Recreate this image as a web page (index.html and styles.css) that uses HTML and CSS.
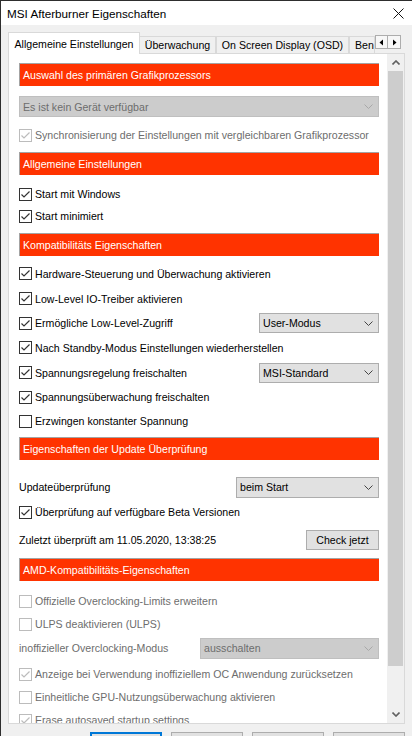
FILE: index.html
```html
<!DOCTYPE html>
<html lang="de">
<head>
<meta charset="utf-8">
<title>MSI Afterburner Eigenschaften</title>
<link rel="stylesheet" href="styles.css">
</head>
<body>
<div class="window">
  <div class="titlebar">
    <span class="title">MSI Afterburner Eigenschaften</span>
    <svg class="close" width="11" height="11" viewBox="0 0 11 11"><path d="M0.5 0.5L10.5 10.5M10.5 0.5L0.5 10.5"/></svg>
  </div>
  <div class="tabstrip">
    <div class="tab active">Allgemeine Einstellungen</div>
    <div class="tab t2">Überwachung</div>
    <div class="tab t3">On Screen Display (OSD)</div>
    <div class="tab t4">Ben</div>
    <div class="tabscroll">
      <span class="tsb"><svg width="5" height="7" viewBox="0 0 5 7"><path d="M4 0.5V6.5L0.5 3.5Z"/></svg></span>
      <span class="tsb"><svg width="5" height="7" viewBox="0 0 5 7"><path d="M1 0.5V6.5L4.5 3.5Z"/></svg></span>
    </div>
  </div>
  <div class="panel">
    <div class="content">
      <div class="hdr">Auswahl des primären Grafikprozessors</div>
      <div class="sel dis full s1"><span>Es ist kein Gerät verfügbar</span><svg class="chev" width="9" height="5" viewBox="0 0 9 5"><path d="M0.5 0.5L4.5 4.5L8.5 0.5"/></svg></div>
      <div class="row r22 m7"><svg class="cb dis" viewBox="0 0 13 13"><rect x="0.5" y="0.5" width="12" height="12"/><path d="M2.5 6.5L5 9L10.5 3.5"/></svg><span class="lbl grey">Synchronisierung der Einstellungen mit vergleichbaren Grafikprozessor</span></div>

      <div class="hdr m6">Allgemeine Einstellungen</div>
      <div class="row r22 m8"><svg class="cb" viewBox="0 0 13 13"><rect x="0.5" y="0.5" width="12" height="12"/><path d="M2.5 6.5L5 9L10.5 3.5"/></svg><span class="lbl">Start mit Windows</span></div>
      <div class="row r22"><svg class="cb" viewBox="0 0 13 13"><rect x="0.5" y="0.5" width="12" height="12"/><path d="M2.5 6.5L5 9L10.5 3.5"/></svg><span class="lbl">Start minimiert</span></div>

      <div class="hdr m6">Kompatibilitäts Eigenschaften</div>
      <div class="row r25 m5"><svg class="cb" viewBox="0 0 13 13"><rect x="0.5" y="0.5" width="12" height="12"/><path d="M2.5 6.5L5 9L10.5 3.5"/></svg><span class="lbl">Hardware-Steuerung und Überwachung aktivieren</span></div>
      <div class="row r25"><svg class="cb" viewBox="0 0 13 13"><rect x="0.5" y="0.5" width="12" height="12"/><path d="M2.5 6.5L5 9L10.5 3.5"/></svg><span class="lbl">Low-Level IO-Treiber aktivieren</span></div>
      <div class="row r24"><svg class="cb" viewBox="0 0 13 13"><rect x="0.5" y="0.5" width="12" height="12"/><path d="M2.5 6.5L5 9L10.5 3.5"/></svg><span class="lbl">Ermögliche Low-Level-Zugriff</span>
        <div class="sel w120"><span>User-Modus</span><svg class="chev" width="9" height="5" viewBox="0 0 9 5"><path d="M0.5 0.5L4.5 4.5L8.5 0.5"/></svg></div></div>
      <div class="row r25"><svg class="cb" viewBox="0 0 13 13"><rect x="0.5" y="0.5" width="12" height="12"/><path d="M2.5 6.5L5 9L10.5 3.5"/></svg><span class="lbl">Nach Standby-Modus Einstellungen wiederherstellen</span></div>
      <div class="row r25"><svg class="cb" viewBox="0 0 13 13"><rect x="0.5" y="0.5" width="12" height="12"/><path d="M2.5 6.5L5 9L10.5 3.5"/></svg><span class="lbl">Spannungsregelung freischalten</span>
        <div class="sel w120"><span>MSI-Standard</span><svg class="chev" width="9" height="5" viewBox="0 0 9 5"><path d="M0.5 0.5L4.5 4.5L8.5 0.5"/></svg></div></div>
      <div class="row r24"><svg class="cb" viewBox="0 0 13 13"><rect x="0.5" y="0.5" width="12" height="12"/><path d="M2.5 6.5L5 9L10.5 3.5"/></svg><span class="lbl">Spannungsüberwachung freischalten</span></div>
      <div class="row r24"><svg class="cb off" viewBox="0 0 13 13"><rect x="0.5" y="0.5" width="12" height="12"/></svg><span class="lbl">Erzwingen konstanter Spannung</span></div>

      <div class="hdr m4">Eigenschaften der Update Überprüfung</div>
      <div class="row r24 m15"><span class="plain">Updateüberprüfung</span>
        <div class="sel w143"><span>beim Start</span><svg class="chev" width="9" height="5" viewBox="0 0 9 5"><path d="M0.5 0.5L4.5 4.5L8.5 0.5"/></svg></div></div>
      <div class="row r24 m1"><svg class="cb" viewBox="0 0 13 13"><rect x="0.5" y="0.5" width="12" height="12"/><path d="M2.5 6.5L5 9L10.5 3.5"/></svg><span class="lbl">Überprüfung auf verfügbare Beta Versionen</span></div>
      <div class="row r24 m4"><span class="plain">Zuletzt überprüft am 11.05.2020, 13:38:25</span><span class="btn check">Check jetzt</span></div>

      <div class="hdr m6">AMD-Kompatibilitäts-Eigenschaften</div>
      <div class="row r24 m8"><svg class="cb dis off" viewBox="0 0 13 13"><rect x="0.5" y="0.5" width="12" height="12"/></svg><span class="lbl grey">Offizielle Overclocking-Limits erweitern</span></div>
      <div class="row r22"><svg class="cb dis off" viewBox="0 0 13 13"><rect x="0.5" y="0.5" width="12" height="12"/></svg><span class="lbl grey">ULPS deaktivieren (ULPS)</span></div>
      <div class="row r24 m1"><span class="plain grey">inoffizieller Overclocking-Modus</span>
        <div class="sel dis w179"><span>ausschalten</span><svg class="chev" width="9" height="5" viewBox="0 0 9 5"><path d="M0.5 0.5L4.5 4.5L8.5 0.5"/></svg></div></div>
      <div class="row r24 m2"><svg class="cb dis" viewBox="0 0 13 13"><rect x="0.5" y="0.5" width="12" height="12"/><path d="M2.5 6.5L5 9L10.5 3.5"/></svg><span class="lbl grey">Anzeige bei Verwendung inoffiziellem OC Anwendung zurücksetzen</span></div>
      <div class="row r22"><svg class="cb dis off" viewBox="0 0 13 13"><rect x="0.5" y="0.5" width="12" height="12"/></svg><span class="lbl grey">Einheitliche GPU-Nutzungsüberwachung aktivieren</span></div>
      <div class="row r22 m1"><svg class="cb dis" viewBox="0 0 13 13"><rect x="0.5" y="0.5" width="12" height="12"/><path d="M2.5 6.5L5 9L10.5 3.5"/></svg><span class="lbl grey">Erase autosaved startup settings</span></div>
    </div>
    <div class="vscroll">
      <div class="sbtn"><svg width="8" height="5" viewBox="0 0 8 5"><path d="M0.5 4.5L4 1L7.5 4.5"/></svg></div>
      <div class="thumb"></div>
      <div class="track"></div>
      <div class="sbtn"><svg width="8" height="5" viewBox="0 0 8 5"><path d="M0.5 0.5L4 4L7.5 0.5"/></svg></div>
    </div>
  </div>
  <div class="buttons">
    <span class="btn big def"></span>
    <span class="btn big"></span>
    <span class="btn big"></span>
    <span class="btn big"></span>
  </div>
</div>
</body>
</html>
```
FILE: styles.css
```css
* { box-sizing: border-box; }
body {
  margin: 0;
  font-family: "Liberation Sans", Arial, sans-serif;
  font-size: 10.6px;
  color: #000;
  background: #f0f0f0;
}
.window {
  width: 412px;
  height: 736px;
  border-top: 1px solid #2e2e2e;
  border-left: 1px solid #2e2e2e;
  background: #f0f0f0;
  overflow: hidden;
}
.titlebar {
  height: 24px;
  background: #fff;
  display: flex;
  align-items: center;
  justify-content: space-between;
  padding-left: 6px;
  padding-right: 8px;
}
.title { font-size: 11.7px; }
.close path { stroke: #111; stroke-width: 1; fill: none; }

.tabstrip {
  position: relative;
  height: 28px;
  display: flex;
  align-items: flex-end;
  padding-left: 7px;
}
.tab {
  height: 17px;
  border: 1px solid #d9d9d9;
  border-bottom: none;
  background: #f0f0f0;
  display: flex;
  align-items: center;
  justify-content: center;
  white-space: nowrap;
  overflow: hidden;
  flex: none;
}
.tab.active {
  width: 132px;
  height: 22px;
  background: #fff;
  margin-bottom: -1px;
  position: relative;
  z-index: 1;
}
.t2 { width: 76px; border-left: none; }
.t3 { width: 133px; }
.t4 { width: 26px; justify-content: flex-start; padding-left: 5px; }
.tabscroll {
  position: absolute;
  left: 374px;
  top: 10px;
  display: flex;
  z-index: 2;
}
.tsb {
  width: 13px;
  height: 14px;
  border: 1px solid #adadad;
  background: #f7f7f7;
  display: flex;
  align-items: center;
  justify-content: center;
}
.tsb + .tsb { border-left: none; }
.tsb path { fill: #000; }

.panel {
  margin-left: 7px;
  width: 397px;
  height: 671px;
  border: 1px solid #d9d9d9;
  background: #fff;
  display: flex;
}
.content {
  flex: 1;
  overflow: hidden;
  padding: 9px 8px 0 10px;
}
.vscroll {
  width: 17px;
  background: #f0f0f0;
  display: flex;
  flex-direction: column;
}
.sbtn {
  height: 17px;
  display: flex;
  align-items: center;
  justify-content: center;
  flex: none;
}
.sbtn path { fill: none; stroke: #606060; stroke-width: 1.6; }
.thumb {
  height: 595px;
  margin: 0 1px;
  background: #cdcdcd;
  flex: none;
}
.track { flex: 1; }

.hdr {
  height: 23px;
  border-top: 1px solid #a3a3a3;
  border-left: 1px solid #a3a3a3;
  background: #ff3300;
  color: #fff;
  padding-left: 3px;
  display: flex;
  align-items: center;
  white-space: nowrap;
}

.row {
  display: flex;
  align-items: center;
  white-space: nowrap;
}
.r22 { height: 22px; }
.r24 { height: 24px; }
.r25 { height: 25px; }
.m1 { margin-top: 1px; }
.m2 { margin-top: 2px; }
.m4 { margin-top: 4px; }
.m5 { margin-top: 5px; }
.m6 { margin-top: 6px; }
.m7 { margin-top: 7px; }
.m8 { margin-top: 8px; }
.m15 { margin-top: 15px; }

.cb { width: 13px; height: 13px; flex: none; }
.cb rect { fill: #fff; stroke: #333; stroke-width: 1; }
.cb path { fill: none; stroke: #333; stroke-width: 1.2; }
.cb.dis rect { stroke: #bcbcbc; }
.cb.dis path { stroke: #bcbcbc; }
.lbl { margin-left: 3px; }
.grey { color: #6d6d6d; }

.sel {
  height: 21px;
  border: 1px solid #adadad;
  background: #e1e1e1;
  display: flex;
  align-items: center;
  justify-content: space-between;
  padding: 0 5px 0 3px;
  margin-left: auto;
  flex: none;
}
.sel .chev path { fill: none; stroke: #444; stroke-width: 1; }
.sel.dis { background: #cccccc; border-color: #bfbfbf; color: #6d6d6d; }
.sel.dis .chev path { stroke: #a8a8a8; }
.sel.full { width: 100%; margin-left: 0; }
.s1 { margin-top: 10px; }
.w120 { width: 120px; height: 20px; }
.w143 { width: 143px; }
.w179 { width: 179px; }

.btn {
  border: 1px solid #adadad;
  background: #e1e1e1;
  display: flex;
  align-items: center;
  justify-content: center;
  flex: none;
}
.check { width: 73px; height: 20px; margin-left: auto; }

.buttons {
  display: flex;
  gap: 9px;
  padding-left: 89px;
  margin-top: 8px;
}
.big { width: 72px; height: 23px; }
.def { border: 2px solid #0078d7; }
```
